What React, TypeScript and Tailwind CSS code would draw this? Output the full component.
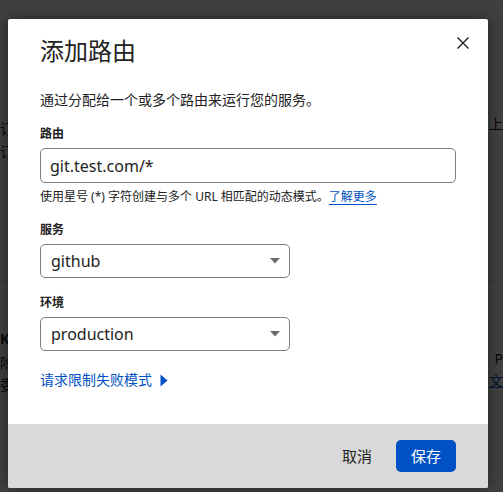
import React from "react";

const font = { fontFamily: '"Noto Sans", "Noto Sans CJK SC", sans-serif' };

function Caret() {
  return (
    <svg width="10" height="6" viewBox="0 0 10 6" className="shrink-0">
      <path d="M0 0 L10 0 L5 5.5 Z" fill="#6b6b6b" />
    </svg>
  );
}

function Select({ value }: { value: string }) {
  return (
    <div className="flex h-[34px] w-[250px] items-center justify-between rounded-[5px] border border-[#7d7d7d] bg-white pl-[10px] pr-[9px] text-[16px] text-[#222]">
      <span>{value}</span>
      <Caret />
    </div>
  );
}

export default function App() {
  return (
    <div className="relative h-[492px] w-[503px] overflow-hidden bg-white" style={font}>
      {/* background page */}
      <div className="flex h-full flex-col text-[#222]">
        <div className="h-[51px] shrink-0 border-b border-[#e6e6e6] bg-[#fafafa]" />
        <div className="flex h-[146px] shrink-0 justify-between border-b border-[#e6e6e6] text-[14px]">
          <div className="flex flex-col pt-[66px] leading-[23px]">
            <span>订</span>
            <span>订</span>
          </div>
          <div className="pt-[62px]">上</div>
        </div>
        <div className="h-[40px] shrink-0 border-b border-[#e6e6e6]" />
        <div className="h-[44px] shrink-0 border-b border-[#e6e6e6]" />
        <div className="h-[17px] shrink-0 border-b border-[#e6e6e6]" />
        <div className="flex h-[145px] shrink-0 justify-between border-b border-[#e6e6e6]">
          <div className="flex flex-col pt-[28px]">
            <span className="text-[14px] font-bold leading-[26px]">K</span>
            <span className="text-[14px] leading-[22px]">除</span>
            <span className="text-[14px] leading-[22px]">委</span>
          </div>
          <div className="flex flex-col items-end pt-[50px] text-[14px] leading-[22px]">
            <span>P</span>
            <span className="text-[#0051c3] underline">文</span>
          </div>
        </div>
        <div className="flex-1" />
      </div>

      {/* overlay */}
      <div className="absolute inset-0 flex items-start justify-start bg-black/75 pl-[8px] pt-[19px]">
        <div className="relative flex h-[469px] w-[480px] flex-col overflow-hidden rounded-[2px] bg-white shadow-[0_0_14px_rgba(0,0,0,0.45)]">
          <button className="absolute right-[18px] top-[17px] flex h-[14px] w-[14px] items-center justify-center">
            <svg width="14" height="14" viewBox="0 0 14 14">
              <path d="M1.5 1.5 L12.5 12.5 M12.5 1.5 L1.5 12.5" stroke="#1f1f1f" strokeWidth="1.4" />
            </svg>
          </button>

          <div className="flex flex-1 flex-col px-[32px] pt-[16px]">
            <h2 className="text-[24px] leading-[32px] text-[#222]">添加路由</h2>
            <p className="mt-[23px] text-[14px] leading-[20px] text-[#222]">
              通过分配给一个或多个路由来运行您的服务。
            </p>

            <label className="mt-[16px] text-[12px] font-semibold leading-[16px] text-[#222]">路由</label>
            <div className="mt-[6px] flex h-[35px] items-center rounded-[5px] border border-[#7d7d7d] px-[9px] text-[16px] text-[#222]">
              git.test.com/*
            </div>
            <p className="mt-[5px] text-[12px] leading-[18px] text-[#222]">
              使用星号 (*) 字符创建与多个 URL 相匹配的动态模式。
              <a className="text-[#0051c3] underline underline-offset-[3px]">了解更多</a>
            </p>

            <label className="mt-[16px] text-[12px] font-semibold leading-[16px] text-[#222]">服务</label>
            <div className="mt-[6px]">
              <Select value="github" />
            </div>

            <label className="mt-[17px] text-[12px] font-semibold leading-[16px] text-[#222]">环境</label>
            <div className="mt-[6px]">
              <Select value="production" />
            </div>

            <div className="mt-[19px] flex items-center gap-[8px] text-[14px] leading-[20px] text-[#0051c3]">
              <span>请求限制失败模式</span>
              <svg width="8" height="13" viewBox="0 0 8 13">
                <path d="M0.5 0.5 L7.5 6.5 L0.5 12.5 Z" fill="#0051c3" />
              </svg>
            </div>
          </div>

          <div className="flex h-[64px] shrink-0 items-center justify-end gap-[12px] bg-[#d9d9d9] pr-[32px]">
            <button className="px-[12px] text-[15px] text-[#222]">取消</button>
            <button className="h-[32px] w-[60px] rounded-[5px] bg-[#0051c3] text-[15px] text-white">保存</button>
          </div>
        </div>
      </div>
    </div>
  );
}
